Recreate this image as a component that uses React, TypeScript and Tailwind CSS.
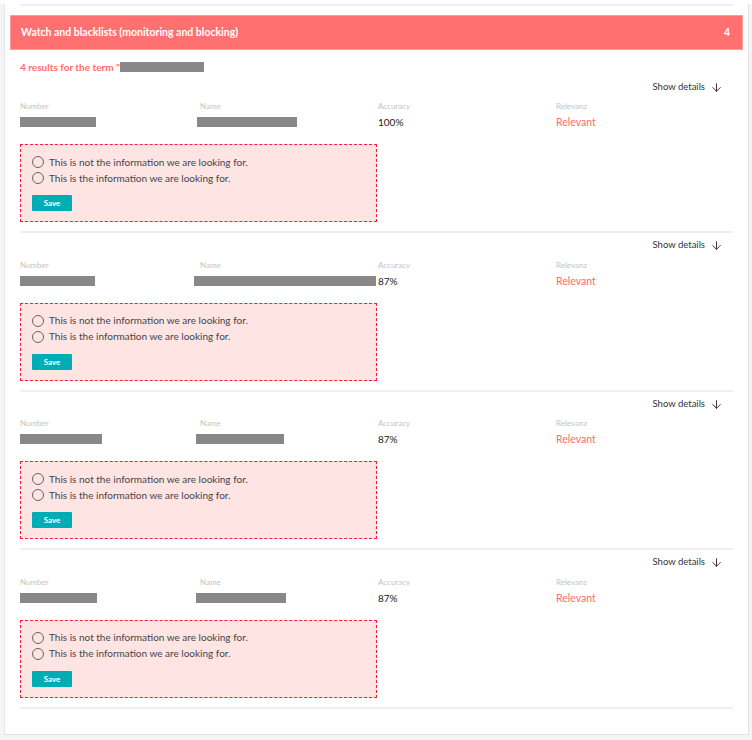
import { ArrowDown } from 'lucide-react';

type Hit = {
  numberW: number;
  nameW: number;
  nameX: number;
  accuracy: string;
};

const hits: Hit[] = [
  { numberW: 76, nameW: 100, nameX: -3, accuracy: '100%' },
  { numberW: 75, nameW: 182, nameX: -6, accuracy: '87%' },
  { numberW: 82, nameW: 88, nameX: -4, accuracy: '87%' },
  { numberW: 77, nameW: 90, nameX: -4, accuracy: '87%' },
];

const options = [
  'This is not the information we are looking for.',
  'This is the information we are looking for.',
];

function Redacted({ width, offset = 0 }: { width: number; offset?: number }) {
  return (
    <span
      className="inline-block h-[10px] bg-[#888888] align-middle"
      style={{ width, marginLeft: offset }}
    />
  );
}

function HitRow({ hit, first }: { hit: Hit; first: boolean }) {
  return (
    <div className={first ? 'pt-[7px]' : 'pt-[5.5px]'}>
      <div className="flex h-[14px] items-center justify-end pr-[10px] text-[9.5px] text-[#333]">
        <span>Show details</span>
        <ArrowDown size={13} strokeWidth={1.8} className="ml-[5px]" />
      </div>

      <div className="mt-[6px] grid grid-cols-[180px_178px_178px_1fr]">
        {['Number', 'Name', 'Accuracy', 'Relevanz'].map((label) => (
          <div key={label} className="h-[12px] text-[8px] leading-[12px] text-[#c4c4c4]">
            {label}
          </div>
        ))}
        <div className="mt-[3px] flex h-[14px] items-center">
          <Redacted width={hit.numberW} />
        </div>
        <div className="mt-[3px] flex h-[14px] items-center">
          <Redacted width={hit.nameW} offset={hit.nameX} />
        </div>
        <div className="mt-[3px] h-[14px] text-[10px] leading-[14px] text-[#222]">{hit.accuracy}</div>
        <div className="mt-[3px] h-[14px] text-[10.5px] leading-[14px] text-[#ff6b6b]">Relevant</div>
      </div>

      <div className="mt-[15px] w-[357px] border border-dashed border-[#ff1a3c] bg-[#ffe4e4] pb-[10px] pl-[11px] pt-[9px]">
        {options.map((text) => (
          <label key={text} className="flex h-[16px] items-center text-[10px] text-[#444]">
            <span className="mr-[5px] inline-block h-[12px] w-[12px] rounded-full border-[1.5px] border-[#666] bg-transparent" />
            {text}
          </label>
        ))}
        <button className="mt-[9px] flex h-[16px] w-[40px] items-center justify-center rounded-[1px] bg-[#00adb5] text-[8px] font-bold text-white">
          Save
        </button>
      </div>

      <div className="mt-[9px] h-[2px] bg-[#efefef]" />
    </div>
  );
}

export default function App() {
  return (
    <div
      className="min-h-[740px] w-[752px] bg-[#f4f4f5] pl-[4px] pr-[3px]"
      style={{ fontFamily: 'Lato, "Open Sans", sans-serif' }}
    >
      <div className="border border-t-0 border-[#e4e4e7] bg-white pb-[25px]">
        <div className="mx-[15px] mt-[4px] h-[2px] bg-[#efefef]" />

        <div className="mx-[5px] mt-[9px] flex h-[35px] items-center justify-between border border-[#ff9c9c] bg-[#ff7070] px-[10px] text-[10.5px] font-bold text-white">
          <span>Watch and blacklists (monitoring and blocking)</span>
          <span className="pr-[2px]">4</span>
        </div>

        <div className="px-[15px]">
          <div className="mt-[11px] flex h-[12px] items-center text-[10px] font-bold text-[#ff6b6b]">
            <span>4 results for the term "</span>
            <span className="inline-block h-[10px] w-[84px] bg-[#888888]" />
          </div>

          {hits.map((hit, i) => (
            <HitRow key={i} hit={hit} first={i === 0} />
          ))}
        </div>
      </div>
    </div>
  );
}
